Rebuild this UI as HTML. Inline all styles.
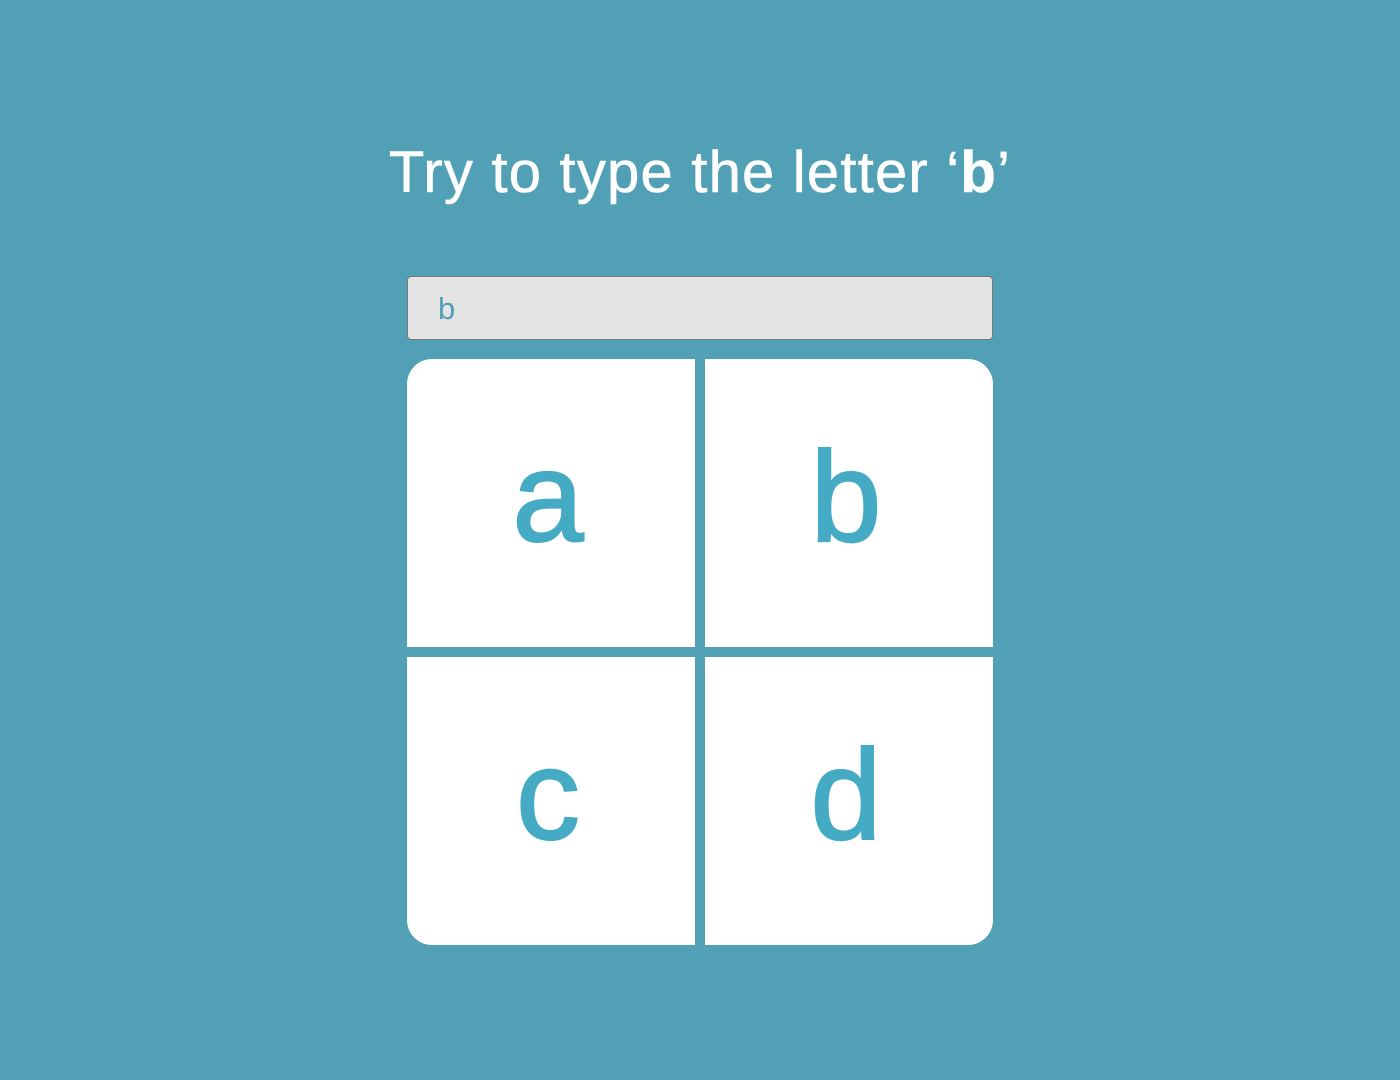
<!DOCTYPE html>
<html><head><style>
html,body{margin:0;padding:0;}
body{width:1400px;height:1080px;background:#52a0b5;position:relative;overflow:hidden;font-family:"Liberation Sans",Helvetica,Arial,sans-serif;}
h1{position:absolute;left:0;width:1400px;top:138px;margin:0;text-align:center;color:#fff;font-weight:normal;font-size:58px;line-height:70px;letter-spacing:1.2px;-webkit-text-stroke:0.6px #fff;}
h1 b{font-weight:bold;}
.inp{position:absolute;left:407px;top:276px;width:584px;height:62px;background:#e4e4e4;border:1px solid #777;border-radius:4px;}
.inp span{position:absolute;left:30px;top:15px;font-size:31px;line-height:34px;color:#52a0b5;}
.cell{position:absolute;width:282px;padding-right:6px;height:288px;background:#fff;color:#45abc4;text-align:center;font-size:128px;line-height:278px;-webkit-text-stroke:2px #45abc4;}
</style></head><body>
<h1>Try to type the letter ‘<b>b</b>’</h1>
<div class="inp"><span>b</span></div>
<div class="cell" style="left:407px;top:359px;border-top-left-radius:25px;">a</div>
<div class="cell" style="left:705px;top:359px;border-top-right-radius:25px;">b</div>
<div class="cell" style="left:407px;top:657px;border-bottom-left-radius:25px;">c</div>
<div class="cell" style="left:705px;top:657px;border-bottom-right-radius:25px;">d</div>
</body></html>
